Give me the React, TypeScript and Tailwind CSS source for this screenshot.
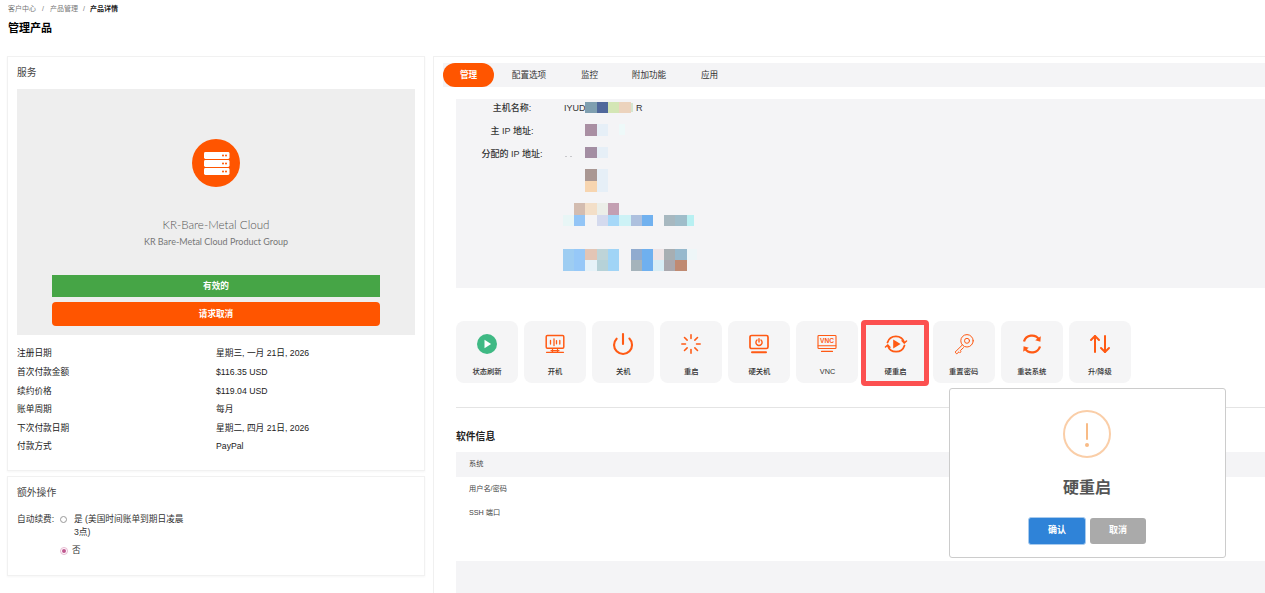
/**
 * Produto - painel de gerenciamento
 */

import { ArrowUpDown, Loader, Power } from "lucide-react";
import type { ReactNode } from "react";

const CJK = "font-['Liberation_Sans','Noto_Sans_CJK_SC',sans-serif]";
const ORANGE = "#ff5a14";

const INFO_ROWS = [
  ["注册日期", "星期三, 一月 21日, 2026", "h-[19px]"],
  ["首次付款金额", "$116.35 USD", "h-[19px]"],
  ["续约价格", "$119.04 USD", "h-[19px]"],
  ["账单周期", "每月", "h-[18px]"],
  ["下次付款日期", "星期二, 四月 21日, 2026", "h-[19px]"],
  ["付款方式", "PayPal", "h-[18px]"],
];

const TABS = [
  ["配置选项", "w-[70px]"],
  ["监控", "w-[51px]"],
  ["附加功能", "w-[68px]"],
  ["应用", "w-[53px]"],
];

// mosaico da área ocultada: [x, y, largura, altura, cor]
const MOSAIC: [number, number, number, number, string][] = [
  [585, 102, 12, 11, "#7f9fb0"], [597, 102, 11, 11, "#50689b"], [608, 102, 11, 11, "#d4e6b5"], [619, 102, 12, 11, "#ecd3bd"],
  [631, 103, 2, 9, "#d5e6d0"],
  [585, 124, 12, 12, "#a98fa3"], [597, 124, 11, 12, "#e6eff7"], [619, 124, 6, 11, "#eef9f9"],
  [585, 147, 12, 11, "#a38ea3"], [597, 147, 11, 11, "#e6eff7"],
  [585, 169, 12, 12, "#a99793"], [597, 169, 11, 12, "#e6eff7"],
  [585, 181, 12, 11, "#f7d5b0"], [597, 181, 11, 11, "#e6eff7"],
  [574, 203, 11, 12, "#d3bcb0"], [585, 203, 12, 12, "#f3dfc8"], [597, 203, 11, 12, "#ebeee8"], [608, 203, 11, 12, "#c39fb2"],
  [563, 215, 11, 11, "#e8f6f6"], [574, 215, 11, 11, "#93c5f6"], [597, 215, 11, 11, "#d4daee"], [608, 215, 11, 11, "#a6d8f8"],
  [619, 215, 12, 11, "#cdf2f6"], [631, 215, 11, 11, "#adc0de"], [642, 215, 11, 11, "#71b1ef"],
  [664, 215, 11, 11, "#a7b8c0"], [675, 215, 12, 11, "#9fbdca"], [687, 215, 7, 11, "#b8f0f2"],
  [563, 249, 11, 11, "#9ecdf2"], [574, 249, 11, 11, "#96c8f8"], [585, 249, 12, 11, "#e3c5b5"], [597, 249, 11, 11, "#bed4d8"], [608, 249, 11, 11, "#a0d4f6"],
  [631, 249, 11, 11, "#90abcf"], [642, 249, 11, 11, "#6fb0ef"], [653, 249, 11, 11, "#eee4e6"], [664, 249, 11, 11, "#a7aeb2"], [675, 249, 12, 11, "#97b9cd"], [687, 249, 10, 11, "#eef6f8"],
  [563, 260, 11, 11, "#9ecdf2"], [574, 260, 11, 11, "#96c8f8"], [585, 260, 12, 11, "#e6f2f8"], [597, 260, 11, 11, "#b6d2d8"], [608, 260, 11, 11, "#a0d4f6"],
  [631, 260, 11, 11, "#a5b3bb"], [642, 260, 11, 11, "#6fb0ef"], [653, 260, 11, 11, "#d8eef6"], [664, 260, 11, 11, "#aaa8ae"], [675, 260, 12, 11, "#c08a72"],
  [565, 156, 2, 1, "#c8c8cc"], [570, 156, 2, 1, "#c8c8cc"],
];

function Glyph({ children, fill = "none" }: { children: ReactNode; fill?: string }) {
  return (
    <svg width="24" height="24" viewBox="0 0 24 24" fill={fill} stroke={ORANGE} strokeWidth="1.5" strokeLinecap="round" strokeLinejoin="round">
      {children}
    </svg>
  );
}

const ACTIONS: { label: string; icon: ReactNode; marked?: boolean }[] = [
  {
    label: "状态刷新",
    icon: (
      <svg width="24" height="24" viewBox="0 0 24 24">
        <circle cx="12" cy="12" r="10" fill="#3fb984" />
        <path d="M9.5 7.8v8.4l6.6-4.2z" fill="#fff" />
      </svg>
    ),
  },
  {
    label: "开机",
    icon: (
      <Glyph>
        <rect x="3.2" y="3.5" width="17.6" height="12.8" rx="1.2" />
        <path d="M8 18.6h8M3.5 20.3h17M9.5 16.5v3.6M14.5 16.5v3.6" strokeWidth="1.2" />
        <path d="M7.5 8.5v3.5M11 6.8v6.8M13.5 8.6v3.2M16.8 8.5v3.5" strokeWidth="1.3" />
      </Glyph>
    ),
  },
  {
    label: "关机",
    icon: <Power size={24} color={ORANGE} strokeWidth={2.1} />,
  },
  {
    label: "重启",
    icon: <Loader size={22} color={ORANGE} strokeWidth={1.7} />,
  },
  {
    label: "硬关机",
    icon: (
      <Glyph>
        <rect x="3" y="3.5" width="18" height="13" rx="1.6" strokeWidth="1.7" />
        <path d="M5 20.3h14" strokeWidth="2" />
        <path d="M10 8a3.1 3.1 0 1 0 4 0M12 6.8v3.2" strokeWidth="1.4" />
      </Glyph>
    ),
  },
  {
    label: "VNC",
    icon: (
      <Glyph>
        <rect x="3" y="3.5" width="18" height="13" rx="0.8" strokeWidth="1.1" />
        <path d="M3.2 13.8h17.6M6.5 19.4h11" strokeWidth="1.1" />
        <text x="12" y="11" textAnchor="middle" fontSize="6.6" fontWeight="700" fill={ORANGE} stroke="none" fontFamily="Liberation Sans, sans-serif">VNC</text>
      </Glyph>
    ),
  },
  {
    label: "硬重启",
    marked: true,
    icon: (
      <Glyph>
        <path d="M3.5 10.5A8.8 8.8 0 0 1 20.3 10.5M20.5 13.5A8.8 8.8 0 0 1 3.7 13.5" strokeWidth="1.8" />
        <path d="M18.1 8.8l2.2 2.2 2.2-2M5.9 15.2l-2.2-2.2-2.2 2" strokeWidth="1.6" />
        <path d="M9.2 7.4v9.2l7.4-4.6z" fill={ORANGE} stroke="none" />
      </Glyph>
    ),
  },
  {
    label: "重置密码",
    icon: (
      <Glyph>
        <circle cx="15" cy="8.8" r="6.2" strokeWidth="1" />
        <circle cx="15" cy="8.8" r="2.5" strokeWidth="1" />
        <path d="M10.3 13L3 20.2l1.8 1.6 2.2-2 .9.9 1.2-1.2-.8-.9 3.2-3" strokeWidth="1" />
      </Glyph>
    ),
  },
  {
    label: "重装系统",
    icon: (
      <Glyph>
        <path d="M4 9.5a8.4 8.4 0 0 1 15-2.2M20 14.5a8.4 8.4 0 0 1-15 2.2" strokeWidth="2.3" strokeLinecap="butt" />
        <path d="M20.8 4.2l-.4 5.6-5.2-1.6zM3.2 19.8l.4-5.6 5.2 1.6z" fill={ORANGE} stroke="none" />
      </Glyph>
    ),
  },
  {
    label: "升/降级",
    icon: <ArrowUpDown size={24} color={ORANGE} strokeWidth={2} />,
  },
];

function ActionButton({ label, icon, marked }: { label: string; icon: ReactNode; marked?: boolean }) {
  return (
    <div className="relative w-[62px] h-[62px] shrink-0 rounded-lg bg-[#f5f5f6] flex flex-col items-center pt-[11px]">
      <div className="h-6 flex items-center justify-center">{icon}</div>
      <span className="mt-[10px] text-[7.3px] leading-[12px] font-medium text-[#333]">{label}</span>
      {marked && (
        <div className="absolute -left-1 -top-px w-[68px] h-[66px] border-[5px] border-[#fc5050] rounded-sm" />
      )}
    </div>
  );
}

export default function App() {
  return (
    <div className={`relative h-[593px] w-[1265px] overflow-hidden bg-white text-[#333] ${CJK}`}>
      <div className="h-[56px] pl-2 pt-[5px]">
        <div className="flex items-center text-[7px] leading-[8px] text-[#777]">
          <span>客户中心</span>
          <span className="mx-[6px]">/</span>
          <span>产品管理</span>
          <span className="mx-[5px]">/</span>
          <span className="font-bold text-[#222]">产品详情</span>
        </div>
        <h1 className="mt-[7px] text-[11px] leading-[16px] font-bold text-black">管理产品</h1>
      </div>

      <div className="flex items-start pl-[7px]">
        {/* Coluna esquerda */}
        <div className="w-[418px] shrink-0 flex flex-col gap-[5px]">
          <section className="h-[415px] border border-[#f1f1f1] shadow-[0_1px_2px_rgba(0,0,0,0.04)] px-[9px] pt-[10px]">
            <h2 className="text-[9.7px] leading-[12px] text-[#444]">服务</h2>
            <div className="mt-[10px] h-[246px] bg-[#eeeeee] flex flex-col items-center pt-[50px] px-[35px]">
              <div className="w-12 h-12 rounded-full bg-[#ff5500] flex items-center justify-center">
                <svg width="27" height="24" viewBox="0 0 27 24">
                  {[1, 9, 17].map((y) => (
                    <g key={y}>
                      <rect x="1" y={y} width="25.5" height="7" rx="1.4" fill="#fff" />
                      <circle cx="20" cy={y + 3.5} r="1" fill="#ff5500" />
                      <circle cx="23" cy={y + 3.5} r="1" fill="#ff5500" />
                    </g>
                  ))}
                </svg>
              </div>
              <div className="mt-[31px] font-['Lato',sans-serif] text-[11.6px] leading-[14px] font-light text-[#555]">KR-Bare-Metal Cloud</div>
              <div className="mt-[3px] font-['Lato',sans-serif] text-[9px] leading-[14px] text-[#777]">KR Bare-Metal Cloud Product Group</div>
              <div className="mt-[26px] w-full h-[22px] bg-[#46a546] text-white text-[8.6px] font-bold flex items-center justify-center">有效的</div>
              <div className="mt-[5px] w-full h-6 rounded-sm bg-[#ff5500] text-white text-[8.6px] font-bold flex items-center justify-center">请求取消</div>
            </div>
            <div className="mt-[9px] text-[8.7px] text-[#222]">
              {INFO_ROWS.map(([label, value, height]) => (
                <div key={label} className={`flex items-center ${height}`}>
                  <span className="w-[199px] shrink-0">{label}</span>
                  <span>{value}</span>
                </div>
              ))}
            </div>
          </section>

          <section className="h-[100px] border border-[#f1f1f1] shadow-[0_1px_2px_rgba(0,0,0,0.04)] px-[9px] pt-[10px]">
            <h2 className="text-[9.8px] leading-[12px] text-[#444]">额外操作</h2>
            <div className="mt-[14px] flex text-[8.7px] leading-[13px] text-[#333]">
              <span className="w-[43px] shrink-0">自动续费:</span>
              <div>
                <div className="flex items-start">
                  <span className="mt-[3px] w-[7px] h-[7px] shrink-0 rounded-full border border-[#999] bg-white" />
                  <span className="ml-[7px] w-[112px]">是 (美国时间账单到期日凌晨3点)</span>
                </div>
                <div className="mt-[5px] flex items-center">
                  <span className="w-[8px] h-[8px] shrink-0 rounded-full border border-[#e6b8d0] flex items-center justify-center">
                    <span className="w-1 h-1 rounded-full bg-[#c0588f]" />
                  </span>
                  <span className="ml-1">否</span>
                </div>
              </div>
            </div>
          </section>
        </div>

        {/* Coluna direita */}
        <div className="ml-2 flex-1 h-[537px] border-l border-t border-[#f0f0f0] pl-[9px] pt-[6px]">
          <nav className="h-6 bg-[#f4f4f6] flex items-center text-[8.6px] text-[#333]">
            <span className="w-[51px] h-6 rounded-full bg-[#ff5500] text-white font-bold flex items-center justify-center">管理</span>
            {TABS.map(([tab, width]) => (
              <span key={tab} className={`${width} text-center`}>{tab}</span>
            ))}
          </nav>

          <div className="pl-[13px]">
            <div className="relative mt-3 h-[189px] bg-[#f4f4f6] pt-[2px] text-[9px] text-[#333]">
              {[
                ["主机名称:", "IYUD"],
                ["主 IP 地址:", ""],
                ["分配的 IP 地址:", ""],
              ].map(([label, value]) => (
                <div key={label} className="flex items-center h-4 mb-[7px]">
                  <span className="w-[108px] pl-1 text-center font-medium">{label}</span>
                  <span>{value}</span>
                </div>
              ))}
              <span className="absolute left-[180px] top-[3px] leading-[13px] h-[13px]">R</span>
              <svg className="absolute inset-0" width="809" height="189" viewBox="456 99 809 189">
                {MOSAIC.map(([x, y, w, h, color], i) => (
                  <rect key={i} x={x} y={y} width={w} height={h} fill={color} />
                ))}
              </svg>
            </div>

            <div className="mt-[33px] flex gap-[6.1px]">
              {ACTIONS.map((action) => (
                <ActionButton key={action.label} {...action} />
              ))}
            </div>

            <div className="mt-6 border-t border-[#e4e4e4]" />

            <h3 className="mt-[22px] text-[9.8px] leading-[14px] font-bold text-[#222]">软件信息</h3>
            <div className="mt-[8px] text-[7.2px] text-[#444]">
              <div className="h-[25px] bg-[#f4f4f6] pl-[13px] flex items-center">系统</div>
              <div className="h-[24px] pl-[13px] flex items-center">用户名/密码</div>
              <div className="h-[24px] pl-[13px] flex items-center">SSH 端口</div>
            </div>
            <div className="mt-[36px] h-[40px] bg-[#f4f4f6]" />
          </div>
        </div>
      </div>

      {/* Diálogo de confirmação */}
      <div className="absolute left-[949px] top-[388px] w-[277px] h-[170px] rounded-[3px] border border-[#cccccc] bg-white flex flex-col items-center pt-[21px] pr-px">
        <div className="w-12 h-12 rounded-full border-2 border-[#facea8] flex flex-col items-center pt-[11px]">
          <span className="w-[2px] h-[17px] rounded-sm bg-[#f8bb86]" />
          <span className="mt-[3px] w-1 h-1 rounded-full bg-[#f8bb86]" />
        </div>
        <div className="mt-[18px] text-[16px] leading-[24px] font-bold text-[#555]">硬重启</div>
        <div className="mt-[17px] flex items-center gap-[4px]">
          <button className="w-[58px] h-7 rounded-[3px] border border-[#a8cbee] bg-[#2f83d8] text-white text-[9px] font-bold">确认</button>
          <button className="w-[56px] h-[26px] rounded-[3px] bg-[#aaaaaa] text-white text-[9px] font-bold">取消</button>
        </div>
      </div>
    </div>
  );
}
